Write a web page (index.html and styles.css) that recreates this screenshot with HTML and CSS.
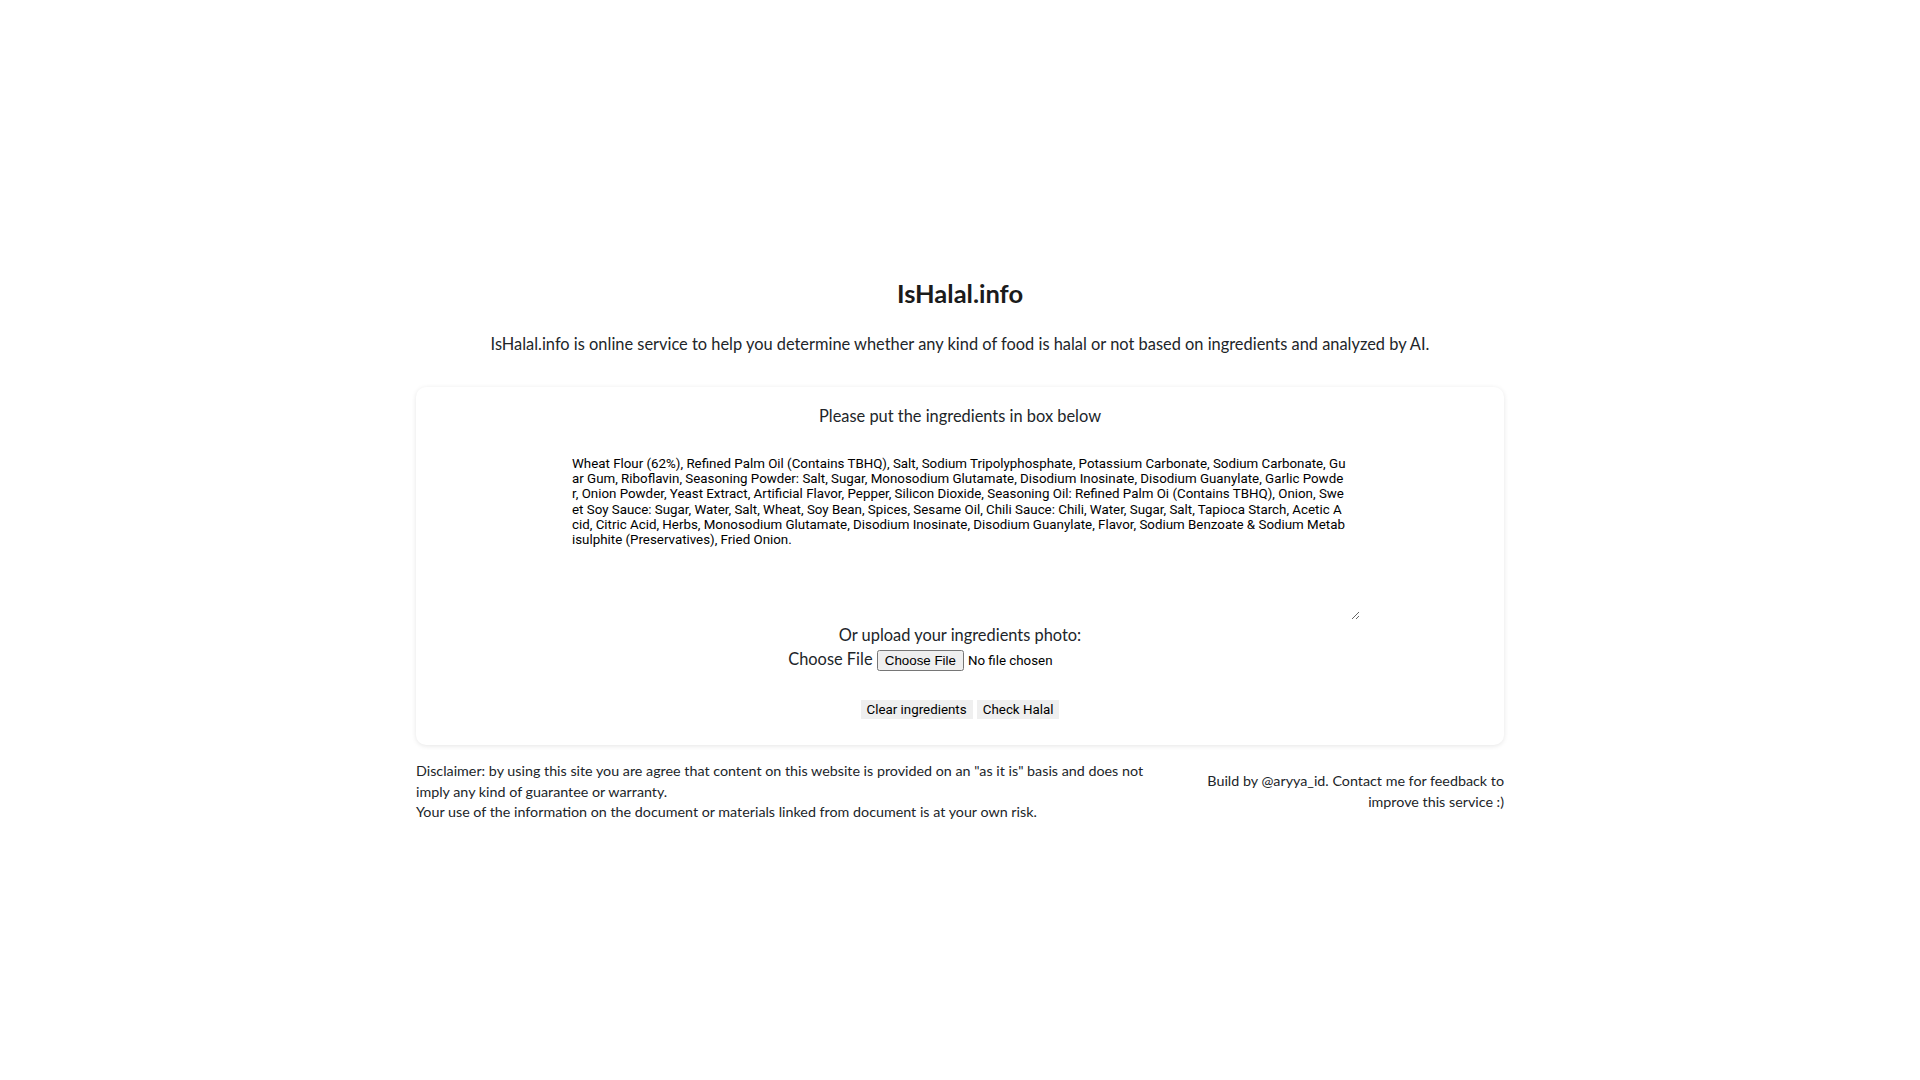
FILE: index.html
```html
<!DOCTYPE html>
<html lang="en">
<head>
<meta charset="utf-8">
<title>IsHalal.info</title>
<link rel="stylesheet" href="styles.css">
</head>
<body>
<main class="page">
  <h1 class="title">IsHalal.info</h1>
  <p class="lead">IsHalal.info is online service to help you determine whether any kind of food is halal or not based on ingredients and analyzed by AI.</p>

  <section class="card">
    <p class="card-label">Please put the ingredients in box below</p>
    <textarea class="ingredients" rows="10">Wheat Flour (62%), Refined Palm Oil (Contains TBHQ), Salt, Sodium Tripolyphosphate, Potassium Carbonate, Sodium Carbonate, Guar Gum, Riboflavin, Seasoning Powder: Salt, Sugar, Monosodium Glutamate, Disodium Inosinate, Disodium Guanylate, Garlic Powder, Onion Powder, Yeast Extract, Artificial Flavor, Pepper, Silicon Dioxide, Seasoning Oil: Refined Palm Oi (Contains TBHQ), Onion, Sweet Soy Sauce: Sugar, Water, Salt, Wheat, Soy Bean, Spices, Sesame Oil, Chili Sauce: Chili, Water, Sugar, Salt, Tapioca Starch, Acetic Acid, Citric Acid, Herbs, Monosodium Glutamate, Disodium Inosinate, Disodium Guanylate, Flavor, Sodium Benzoate &amp; Sodium Metabisulphite (Preservatives), Fried Onion.</textarea>
    <p class="upload-label">Or upload your ingredients photo:</p>
    <div class="file-row"><label for="photo">Choose File</label> <input id="photo" class="file-input" type="file" accept="image/*"></div>
    <div class="actions"><button class="btn" type="button">Clear ingredients</button> <button class="btn" type="button">Check Halal</button></div>
  </section>

  <footer class="footer">
    <p class="disclaimer">Disclaimer: by using this site you are agree that content on this website is provided on an "as it is" basis and does not imply any kind of guarantee or warranty.<br>Your use of the information on the document or materials linked from document is at your own risk.</p>
    <p class="credit">Build by @aryya_id. Contact me for feedback to improve this service :)</p>
  </footer>
</main>
</body>
</html>
```
FILE: styles.css
```css
html, body {
  margin: 0;
  padding: 0;
  background: #ffffff;
}

body {
  font-family: "Lato", "Noto Sans", sans-serif;
  color: #212529;
}

.page {
  width: 1088px;
  margin: 0 auto;
  padding-top: 277px;
}

.title {
  margin: 0;
  font-size: 25.5px;
  line-height: 32px;
  font-weight: 700;
  text-align: center;
  color: #1b1b1b;
}

.lead {
  margin: 23px 0 0;
  font-size: 16.4px;
  line-height: 24px;
  text-align: center;
}

.card {
  box-sizing: border-box;
  margin-top: 31px;
  padding: 17px 16px 26px;
  background: #ffffff;
  border-radius: 10px;
  box-shadow: 0 1px 5px rgba(0, 0, 0, 0.1);
  text-align: center;
  font-size: 16.4px;
  line-height: 24px;
}

.card-label {
  margin: 0;
}

.ingredients {
  display: block;
  box-sizing: border-box;
  width: 800px;
  margin: 16px auto 0;
  padding: 12px;
  border: none;
  outline: none;
  background: #ffffff;
  color: #000000;
  font-family: "Roboto", sans-serif;
  font-size: 13.333px;
  line-height: 15.2px;
  word-break: break-all;
  resize: both;
}

.upload-label {
  margin: 3px 0 0;
}

.file-row {
  margin: 0;
}

.file-row label {
  color: #212529;
}

.file-input {
  font-family: "Roboto", sans-serif;
  font-size: 13.333px;
  color: #000000;
}

.actions {
  margin-top: 29px;
  line-height: 0;
}

.btn {
  font-family: "Roboto", sans-serif;
  font-size: 13.333px;
  line-height: normal;
  padding: 2px 6px;
  border: none;
  border-radius: 0;
  background: #efefef;
  color: #000000;
  vertical-align: top;
}

.footer {
  display: grid;
  grid-template-columns: 1fr 320px;
  column-gap: 18px;
  align-items: center;
  margin-top: 16px;
  font-size: 14.3px;
  line-height: 20.7px;
}

.disclaimer {
  margin: 0;
}

.credit {
  margin: 0;
  text-align: right;
}
```
